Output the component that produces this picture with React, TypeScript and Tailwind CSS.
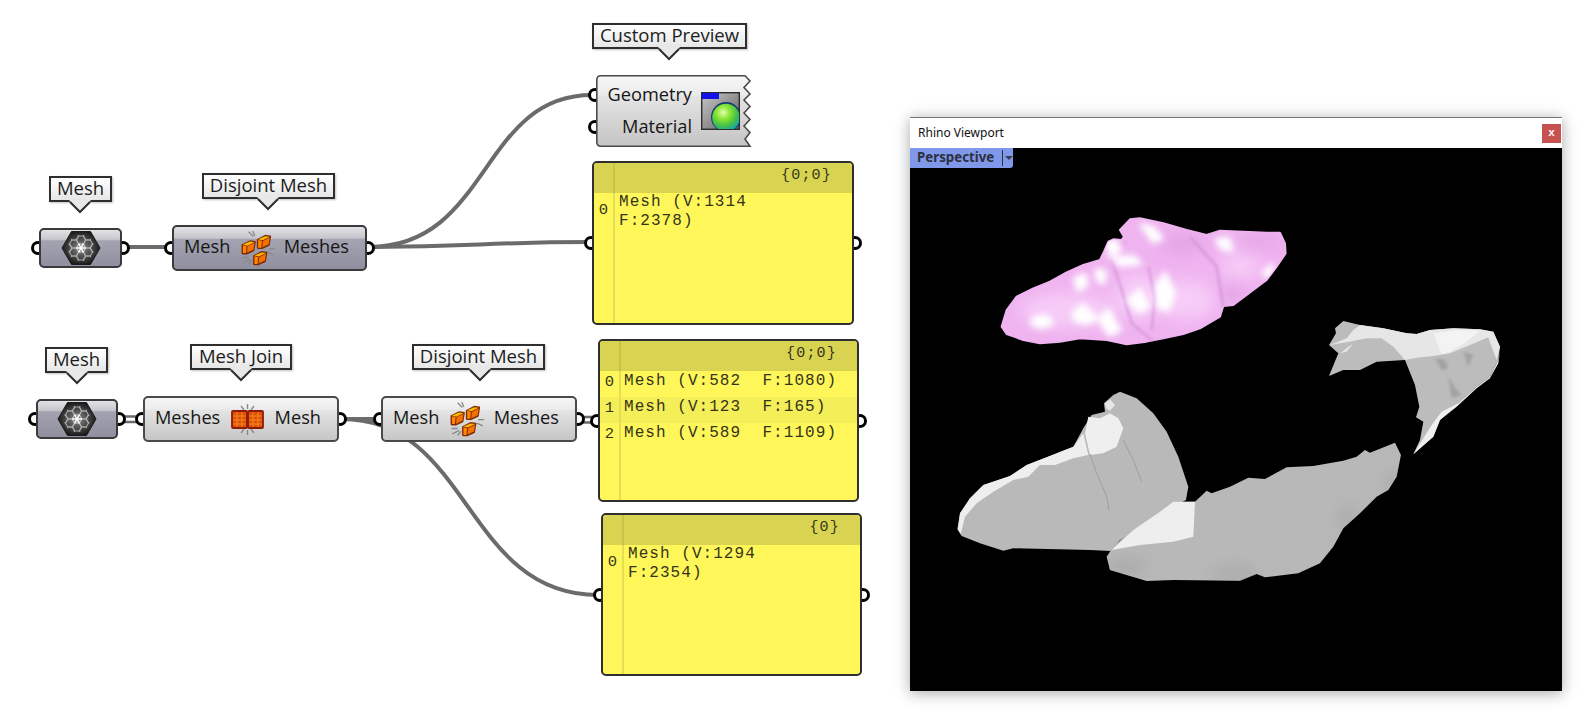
import type { ReactNode } from "react";

function Tooltip({ pos, tailPos, label }: { pos: string; tailPos: string; label: string }) {
  return (
    <div className={`absolute h-[26px] flex items-center justify-center pb-[2px] border-2 border-[#2e2e2e] bg-[linear-gradient(#ffffff,#e6e6e6)] text-[18.5px] leading-none text-[#1c1c1c] shadow-[1px_1px_2px_rgba(0,0,0,0.25)] ${pos}`}>
      {label}
      <svg className={`absolute top-[22px] ${tailPos}`} width="24" height="14" viewBox="0 0 24 14">
        <polygon points="1,0 12,12 23,0" fill="#e8e8e8" />
        <polyline points="2,2 12,12 22,2" fill="none" stroke="#2e2e2e" strokeWidth="2" />
      </svg>
    </div>
  );
}

function Grip({ side }: { side: "left" | "right" }) {
  return (
    <div
      className={
        side === "left"
          ? "absolute -left-[8px] top-1/2 -translate-y-1/2 w-[14px] h-[14px] rounded-full border-[3.5px] border-black bg-white"
          : "absolute -right-[8px] top-1/2 -translate-y-1/2 w-[14px] h-[14px] rounded-full border-[3.5px] border-black bg-white"
      }
    />
  );
}

function Capsule({ pos, dark, children }: { pos: string; dark?: boolean; children: ReactNode }) {
  return (
    <div className={`absolute ${pos}`}>
      <Grip side="left" />
      <Grip side="right" />
      <div
        className={
          dark
            ? "relative h-full flex items-center justify-between rounded-[5px] border-2 border-[#3a3a3a] pl-[10px] pr-[16px] text-[#161616] text-[18.2px] bg-[linear-gradient(#e2e2e6_0%,#c6c6cc_26%,#a3a3b1_30%,#8f8f9f_100%)]"
            : "relative h-full flex items-center justify-between rounded-[5px] border-2 border-[#4a4a4a] pl-[10px] pr-[16px] text-[#161616] text-[18.2px] bg-[linear-gradient(#f6f6f6_0%,#ececec_26%,#e4e4e4_30%,#c6c6c6_100%)]"
        }
      >
        {children}
      </div>
    </div>
  );
}

function Label({ children }: { children: ReactNode }) {
  return <span className="-mt-[2px]">{children}</span>;
}

// flat-top honeycomb cells, centres in the icon's own units
const cells = [
  [20, 18], [20, 10], [20, 26], [13, 14], [27, 14], [13, 22], [27, 22], [6.500, 18], [33.500, 18], [13, 6], [27, 6], [13, 30], [27, 30],
];

function hexPoints(cx: number, cy: number) {
  const r = 4.6;
  return [0, 60, 120, 180, 240, 300]
    .map((a) => `${cx + r * Math.cos((a * Math.PI) / 180)},${cy + r * Math.sin((a * Math.PI) / 180)}`)
    .join(" ");
}

function MeshIcon() {
  return (
    <svg className="absolute left-1/2 top-1/2 -translate-x-1/2 -translate-y-1/2" width="40" height="36" viewBox="0 0 40 36">
      <defs>
        <radialGradient id="hexFill" cx="50%" cy="50%" r="55%">
          <stop offset="0%" stopColor="#8a8a8a" />
          <stop offset="55%" stopColor="#484848" />
          <stop offset="100%" stopColor="#121212" />
        </radialGradient>
        <clipPath id="hexClip">
          <polygon points="5,18 12.500,5 27.500,5 35,18 27.500,31 12.500,31" />
        </clipPath>
      </defs>
      <polygon points="1,18 10.5,1.5 29.5,1.5 39,18 29.5,34.5 10.5,34.5" fill="url(#hexFill)" stroke="#1c1c1c" strokeWidth="1" />
      <g clipPath="url(#hexClip)" fill="none" stroke="#c4c4c4" strokeWidth="1.100" opacity="0.8">
        {cells.map(([x, y]) => (
          <polygon key={`${x}-${y}`} points={hexPoints(x, y)} />
        ))}
      </g>
      <path d="M15 18 H25 M17.500 13.700 L22.500 22.300 M22.500 13.700 L17.500 22.300" stroke="#ffffff" strokeWidth="1.500" />
    </svg>
  );
}

function Cube({ x, y }: { x: number; y: number }) {
  return (
    <g transform={`translate(${x} ${y})`}>
      <path d="M1 14 L26 1 L41 3 Q44 3 43 7 L39 31 Q39 33 36 34 L17 43 L5 43 Q1 43 1 39 Z" fill="#7c2c08" />
      <path d="M5 14 L26 5 L39 7 L18 17 Z" fill="#ffb800" />
      <path d="M5 16 L16 19 L14 39 L5 39 Z" fill="#ff8400" />
      <path d="M19 19 L39 9 L36 29 L17 38 Z" fill="#f47000" />
    </g>
  );
}

function DisjointIcon() {
  return (
    <svg width="37" height="38" viewBox="28 8 108 112">
      <g stroke="#8a8a8a" strokeWidth="4" fill="none">
        <path d="M56 16 L70 30 M68 14 L74 28 M116 66 L134 66 M112 76 L130 84 M38 92 L56 92 M40 108 L60 98 M56 112 L66 100" />
      </g>
      <Cube x={34} y={40} />
      <Cube x={79} y={24} />
      <Cube x={68} y={72} />
    </svg>
  );
}

function JoinIcon() {
  return (
    <svg width="33" height="33" viewBox="0 0 33 33">
      <g stroke="#8a8a8a" strokeWidth="1.4">
        <path d="M16.500 1 V6 M10 3 L13 7 M23 3 L20 7 M16.500 27 V32 M10 30 L13 26 M23 30 L20 26" />
      </g>
      <rect x="1" y="8" width="15" height="17" rx="1" fill="#e0500a" stroke="#8a1c08" strokeWidth="1.800" />
      <rect x="17" y="8" width="15" height="17" rx="1" fill="#e0500a" stroke="#8a1c08" strokeWidth="1.800" />
      <path d="M6 9 V24 M11 9 V24 M22 9 V24 M27 9 V24 M2 13 H15 M2 17 H15 M2 21 H15 M18 13 H31 M18 17 H31 M18 21 H31" stroke="#f49020" strokeWidth="0.9" />
    </svg>
  );
}

function CustomPreview() {
  return (
    <div className="absolute left-[596px] top-[75px] w-[154px] h-[72px]">
      <div className="absolute -left-[8px] top-[13px] w-[14px] h-[14px] rounded-full border-[3.5px] border-black bg-white" />
      <div className="absolute -left-[8px] top-[45px] w-[14px] h-[14px] rounded-full border-[3.5px] border-black bg-white" />
      <svg className="absolute inset-0 overflow-visible" width="154" height="72" viewBox="0 0 154 72">
        <defs>
          <linearGradient id="previewFill" x1="0" y1="0" x2="0" y2="1">
            <stop offset="0" stopColor="#f6f6f6" />
            <stop offset="0.26" stopColor="#ececec" />
            <stop offset="0.3" stopColor="#e4e4e4" />
            <stop offset="1" stopColor="#c4c4c4" />
          </linearGradient>
        </defs>
        <path
          d="M5 0.800 H149 L154 6 L148 12.500 L154 19 L148 25 L154 31.500 L148 38 L154 44.500 L148 51 L154 57.500 L149 64 L154 71.200 H5 Q0.800 71.200 0.800 67 V5 Q0.800 0.800 5 0.800 Z"
          fill="url(#previewFill)"
          stroke="#4a4a4a"
          strokeWidth="1.600"
        />
      </svg>
      <div className="relative h-full flex items-center justify-end pr-[10px] gap-[9px]">
        <div className="flex flex-col items-end pb-[3px] text-[18.2px] leading-[32px] text-[#161616]">
          <span>Geometry</span>
          <span>Material</span>
        </div>
        <svg width="39" height="38" viewBox="0 0 39 38">
          <defs>
            <linearGradient id="tile" x1="0" y1="0" x2="1" y2="1">
              <stop offset="0" stopColor="#c8c8c8" />
              <stop offset="1" stopColor="#5e5e5e" />
            </linearGradient>
            <radialGradient id="ball" cx="40%" cy="32%" r="70%">
              <stop offset="0" stopColor="#e0ffb0" />
              <stop offset="0.35" stopColor="#8ae634" />
              <stop offset="0.7" stopColor="#45c048" />
              <stop offset="1" stopColor="#10a8b0" />
            </radialGradient>
            <clipPath id="tileClip">
              <rect x="1" y="1" width="37" height="36" />
            </clipPath>
          </defs>
          <rect x="0.700" y="0.700" width="37.600" height="36.600" fill="url(#tile)" stroke="#2c2c2c" strokeWidth="1.400" />
          <rect x="1" y="1" width="17" height="6" fill="#1010e8" />
          <g clipPath="url(#tileClip)">
            <circle cx="25" cy="25" r="15" fill="#1a3a70" />
            <circle cx="25" cy="25.500" r="13.800" fill="url(#ball)" />
          </g>
        </svg>
      </div>
    </div>
  );
}

type Row = { index: string; lines: string[]; band?: boolean };

function Panel({ pos, path, rows }: { pos: string; path: string; rows: Row[] }) {
  return (
    <div className={`absolute ${pos}`}>
      <Grip side="left" />
      <Grip side="right" />
      <div className="relative h-full flex flex-col rounded-[5px] border-2 border-[#2f2f2f] bg-[#fff759] font-['Liberation_Mono',monospace] text-[#34341a] text-[16px] tracking-[1.05px] leading-[19px] overflow-hidden">
        <div className="flex h-[30px] shrink-0 bg-[#d8d452]">
          <div className="w-[21px] shrink-0 border-r-2 border-[#c6c24a]" />
          <div className="flex-1 text-right pr-[20px] text-[15px] tracking-[1.2px] pt-[3px]">{path}</div>
        </div>
        {rows.map((row) => (
          <div key={row.index} className={row.band ? "flex bg-[#f4ee58]" : "flex"}>
            <div className="w-[21px] shrink-0 border-r-2 border-[#e3df55] flex items-center justify-center pb-[3px] text-[15.5px] tracking-normal">
              {row.index}
            </div>
            <div className={row.lines.length > 1 ? "pl-[4px] whitespace-pre" : "pl-[3px] whitespace-pre h-[26px] pt-[1px]"}>
              {row.lines.map((line) => (
                <div key={line}>{line}</div>
              ))}
            </div>
          </div>
        ))}
        <div className="flex flex-1">
          <div className="w-[21px] shrink-0 border-r-2 border-[#e3df55]" />
        </div>
      </div>
    </div>
  );
}

function Wires() {
  return (
    <svg className="absolute inset-0" width="1591" height="723" viewBox="0 0 1591 723" fill="none">
      <g stroke="#6b6b6b" strokeWidth="4">
        <path d="M125 247 H168" />
        <path d="M369 247 C 490 247 480 95 592 95" />
        <path d="M369 247 C 480 247 480 242 592 242" />
        <path d="M342 419 H380" />
        <path d="M342 419 C 470 419 465 595 598 595" />
      </g>
      <g stroke="#6b6b6b" strokeWidth="2.400">
        <path d="M120 416.500 H144 M120 422 H144" />
        <path d="M578 417 H596 M578 422.500 H596" />
      </g>
    </svg>
  );
}

function Croissant() {
  const outline =
    "305,650 320,600 350,560 400,535 450,515 500,487 550,465 600,450 612,425 625,395 640,388 665,390 672,380 660,360 690,328 720,325 790,340 860,360 920,375 960,362 1030,365 1100,368 1140,368 1155,400 1157,430 1130,470 1100,510 1040,555 1000,585 970,588 960,620 900,655 850,672 790,685 740,695 680,703 620,690 540,685 480,695 420,700 370,690 320,672";
  return (
    <g transform="translate(900 110) scale(0.3333)">
      <clipPath id="croissantClip">
        <polygon points={outline} />
      </clipPath>
      <polygon points={outline} fill="#efb3f0" stroke="#efb3f0" strokeWidth="6" strokeLinejoin="round" />
      <g clipPath="url(#croissantClip)">
        <g filter="url(#softLarge)" fill="#f7ccf7">
          <ellipse cx="860" cy="570" rx="90" ry="60" />
          <ellipse cx="1020" cy="470" rx="60" ry="40" />
          <ellipse cx="500" cy="600" rx="140" ry="50" />
          <ellipse cx="720" cy="560" rx="80" ry="70" />
        </g>
        <g filter="url(#softLarge)" fill="#e0a2e3">
          <ellipse cx="1080" cy="395" rx="70" ry="14" />
          <ellipse cx="850" cy="400" rx="70" ry="22" />
          <ellipse cx="1000" cy="550" rx="30" ry="26" />
        </g>
        <g filter="url(#softTiny)" stroke="#d898dc" fill="none">
          <path d="M635 450 L665 540 L695 640 L760 695" strokeWidth="7" />
          <path d="M745 470 L765 560 L755 660" strokeWidth="7" />
          <path d="M870 380 L950 470 L970 590" strokeWidth="8" />
          <path d="M680 395 L620 425" strokeWidth="5" />
        </g>
        <g filter="url(#softSmall)" fill="#ffffff" stroke="#ffffff" strokeWidth="12" strokeLinejoin="round">
          <polygon points="400,625 440,618 458,640 420,652 395,640" />
          <polygon points="520,610 548,585 590,625 560,640 525,630" />
          <polygon points="600,625 625,600 660,660 630,675 610,650" />
          <polygon points="525,505 555,495 560,525 535,540" />
          <polygon points="590,480 615,485 610,520 590,505" />
          <polygon points="685,570 720,540 745,590 715,605" />
          <polygon points="770,530 795,490 822,550 805,600 775,590" />
          <polygon points="725,345 760,355 785,385 760,395" />
          <polygon points="950,390 985,385 995,420 965,415" />
          <polygon points="1090,490 1115,465 1110,500" />
          <polygon points="640,445 700,440 720,460 660,465" />
          <polygon points="620,395 650,395 660,420 630,435" />
        </g>
      </g>
    </g>
  );
}

function Shards() {
  const left =
    "52,478 60,430 90,385 130,345 210,318 260,285 320,262 400,230 430,175 455,135 495,125 492,100 520,75 540,65 590,85 640,130 680,185 715,260 745,350 738,390 680,420 600,470 540,510 512,543 450,540 220,535 190,542 120,520 65,498";
  const right =
    "500,560 520,530 590,465 660,420 700,395 765,395 800,362 815,370 870,350 925,323 975,327 1040,292 1120,288 1210,272 1250,260 1275,240 1290,248 1365,218 1383,255 1370,320 1345,360 1310,380 1260,430 1210,475 1180,530 1140,580 1075,610 975,622 950,612 900,632 700,630 620,633 510,600";
  return (
    <g>
      <g transform="translate(940 370) scale(0.3333)">
        <polygon points={left} fill="#b9b9b9" />
        <polygon points="54,478 60,430 90,385 130,345 210,318 260,285 320,262 400,230 430,190 445,255 400,265 345,285 300,285 265,320 220,330 160,365 110,400 75,440 62,492" fill="#eeeeee" />
        <polygon points="445,140 480,145 510,130 535,145 550,175 530,230 490,250 450,255 435,190" fill="#efefef" />
        <polygon points="495,100 510,88 525,105 510,122 498,115" fill="#e6e6e6" />
        <path d="M450 252 L470 310 L500 380 L507 422" stroke="#9e9e9e" strokeWidth="3" fill="none" />
        <path d="M550 210 L580 270 L605 335" stroke="#9e9e9e" strokeWidth="3" fill="none" />
        <clipPath id="rightClip">
          <polygon points={right} />
        </clipPath>
        <polygon points={right} fill="#b8b8b8" />
        <g clipPath="url(#rightClip)">
          <g filter="url(#softLarge)" fill="#a4a4a4">
            <ellipse cx="560" cy="590" rx="60" ry="18" />
            <ellipse cx="880" cy="610" rx="70" ry="16" />
            <ellipse cx="1225" cy="440" rx="24" ry="28" />
            <ellipse cx="1360" cy="335" rx="18" ry="30" />
          </g>
        </g>
        <polygon points="515,540 580,480 660,425 700,395 765,395 760,500 700,515 600,525" fill="#eeeeee" />
      </g>
      <g transform="translate(1310 310) scale(0.3333)">
        <polygon
          points="57,105 78,70 75,55 100,33 150,45 220,55 290,70 320,72 360,60 430,55 510,58 550,65 570,110 565,150 540,200 500,230 440,285 390,330 370,380 310,433 330,390 340,335 318,322 328,290 315,225 285,150 200,155 150,180 100,180 57,198 85,130"
          fill="#bcbcbc"
        />
        <polygon
          points="60,105 110,85 130,60 150,45 220,55 290,70 320,72 360,60 430,55 510,58 550,65 570,110 560,150 545,110 535,82 480,105 420,130 370,138 320,143 285,150 250,110 215,85 170,85 110,97"
          fill="#e6e6e6"
        />
        <polygon points="370,70 440,60 510,62 470,95 420,125 395,132" fill="#f3f3f3" />
        <polygon points="310,433 365,345 395,305 445,280 500,230 540,200 565,150 570,125 565,160 540,205 500,235 440,290 390,330 370,380" fill="#efefef" />
        <polygon points="90,130 130,100 110,125" fill="#e6e6e6" />
        <g filter="url(#softTiny)" fill="#a2a2a2">
          <polygon points="375,145 405,150 415,175 395,180" />
          <polygon points="415,200 440,240 455,255 425,265" />
          <polygon points="460,125 490,135 475,170" />
        </g>
      </g>
    </g>
  );
}

function Viewport() {
  return (
    <div className="absolute left-[910px] top-[117px] w-[652px] h-[574px] flex flex-col bg-white border-t border-[#777] shadow-[0_2px_14px_rgba(0,0,0,0.35)]">
      <div className="h-[30px] shrink-0 flex items-center justify-between pl-[8px] pr-[1px] text-[12px] text-[#111] font-['Noto_Sans',sans-serif]">
        <span>Rhino Viewport</span>
        <div className="w-[19px] h-[19px] bg-[#c75050] flex items-center justify-center text-white text-[11px] font-bold font-['Liberation_Mono',monospace]">x</div>
      </div>
      <div className="relative flex-1 bg-black">
        <svg className="block" width="652" height="543" viewBox="910 148 652 543">
          <defs>
            <filter id="softLarge" x="-50%" y="-50%" width="200%" height="200%">
              <feGaussianBlur stdDeviation="24" />
            </filter>
            <filter id="softSmall" x="-20%" y="-20%" width="140%" height="140%">
              <feGaussianBlur stdDeviation="10" />
            </filter>
            <filter id="softTiny" x="-20%" y="-20%" width="140%" height="140%">
              <feGaussianBlur stdDeviation="4" />
            </filter>
          </defs>
          <Croissant />
          <Shards />
        </svg>
        <div className="absolute left-0 top-0 h-[20px] w-[103px] flex items-center bg-[#7f98e9] rounded-br-[3px] pl-[7px] text-[13.3px] font-bold text-[#2d3040] font-['Noto_Sans',sans-serif]">
          <span>Perspective</span>
          <span className="absolute left-[92px] top-[2px] h-[16px] w-px bg-[#2d3040]" />
          <span className="absolute left-[95px] top-[8px] w-0 h-0 border-x-[4px] border-x-transparent border-t-[4px] border-t-[#3a3d50]" />
        </div>
      </div>
    </div>
  );
}

export default function App() {
  return (
    <div className="relative w-[1591px] h-[723px] overflow-hidden bg-white font-['Open_Sans',sans-serif]">
      <Wires />

      <Tooltip pos="left-[49px] top-[176px] w-[63px]" tailPos="left-[17px]" label="Mesh" />
      <Tooltip pos="left-[202px] top-[173px] w-[133px]" tailPos="left-[52px]" label="Disjoint Mesh" />
      <Tooltip pos="left-[592px] top-[23px] w-[155px]" tailPos="left-[63px]" label="Custom Preview" />
      <Tooltip pos="left-[45px] top-[347px] w-[63px]" tailPos="left-[18px]" label="Mesh" />
      <Tooltip pos="left-[190px] top-[344px] w-[102px]" tailPos="left-[37px]" label="Mesh Join" />
      <Tooltip pos="left-[412px] top-[344px] w-[133px]" tailPos="left-[54px]" label="Disjoint Mesh" />

      <Capsule pos="left-[39px] top-[228px] w-[83px] h-[40px]" dark>
        <MeshIcon />
      </Capsule>
      <Capsule pos="left-[172px] top-[225px] w-[195px] h-[46px]" dark>
        <Label>Mesh</Label>
        <DisjointIcon />
        <Label>Meshes</Label>
      </Capsule>
      <Capsule pos="left-[36px] top-[399px] w-[82px] h-[40px]" dark>
        <MeshIcon />
      </Capsule>
      <Capsule pos="left-[143px] top-[396px] w-[196px] h-[46px]">
        <Label>Meshes</Label>
        <JoinIcon />
        <Label>Mesh</Label>
      </Capsule>
      <Capsule pos="left-[381px] top-[396px] w-[196px] h-[46px]">
        <Label>Mesh</Label>
        <DisjointIcon />
        <Label>Meshes</Label>
      </Capsule>

      <CustomPreview />

      <Panel
        pos="left-[592px] top-[161px] w-[262px] h-[164px]"
        path="{0;0}"
        rows={[{ index: "0", lines: ["Mesh (V:1314", "F:2378)"] }]}
      />
      <Panel
        pos="left-[598px] top-[339px] w-[261px] h-[163px]"
        path="{0;0}"
        rows={[
          { index: "0", lines: ["Mesh (V:582  F:1080)"] },
          { index: "1", lines: ["Mesh (V:123  F:165)"], band: true },
          { index: "2", lines: ["Mesh (V:589  F:1109)"] },
        ]}
      />
      <Panel
        pos="left-[601px] top-[513px] w-[261px] h-[163px]"
        path="{0}"
        rows={[{ index: "0", lines: ["Mesh (V:1294", "F:2354)"] }]}
      />

      <Viewport />
    </div>
  );
}
